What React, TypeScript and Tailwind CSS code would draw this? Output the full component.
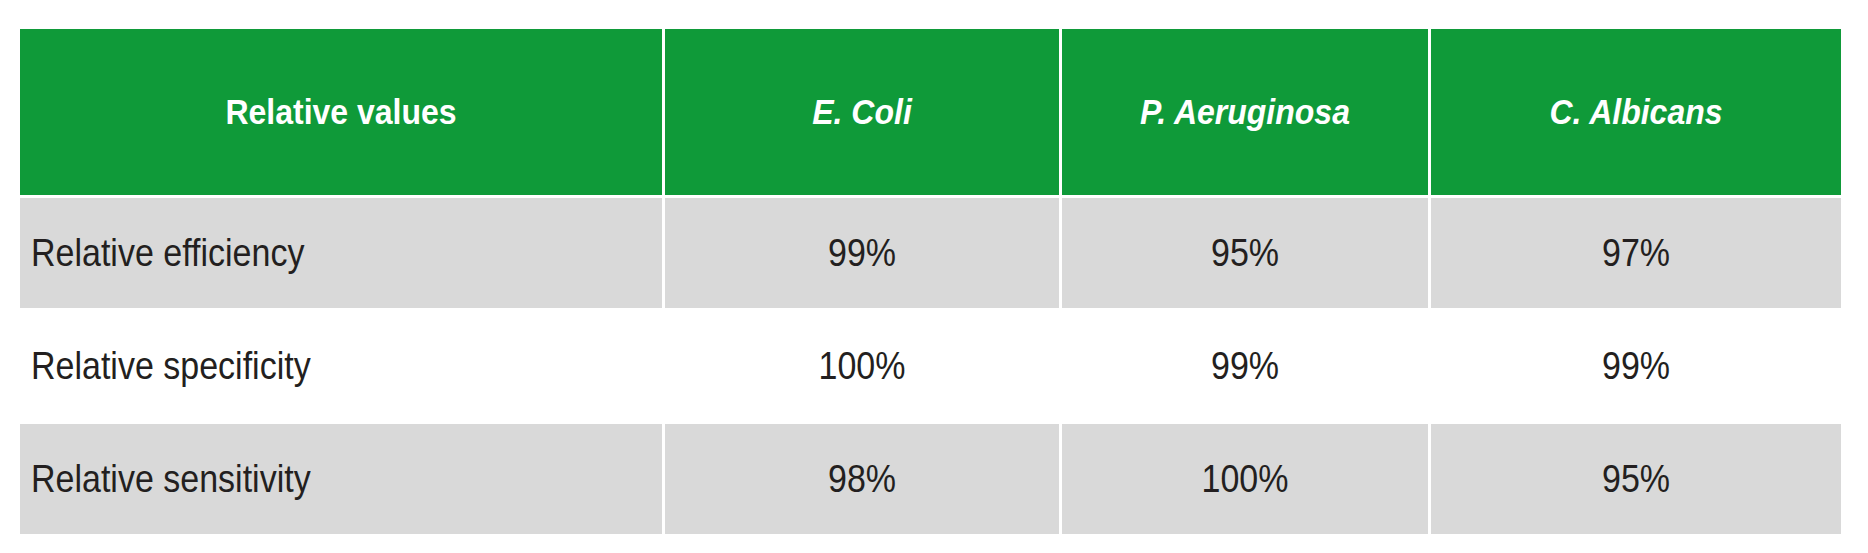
import React from "react";

type Row = {
  label: string;
  values: string[];
  shaded: boolean;
};

const species = ["E. Coli", "P. Aeruginosa", "C. Albicans"];

const rows: Row[] = [
  { label: "Relative efficiency", values: ["99%", "95%", "97%"], shaded: true },
  { label: "Relative specificity", values: ["100%", "99%", "99%"], shaded: false },
  { label: "Relative sensitivity", values: ["98%", "100%", "95%"], shaded: true },
];

export default function App() {
  return (
    <div className="min-h-[553px] w-full bg-white pl-[20px] pt-[29px] font-['Liberation_Sans',Arial,sans-serif]">
      <div className="grid w-[1821px] grid-cols-[642px_394px_366px_410px] grid-rows-[166px_110px_110px_110px] gap-[3px] bg-white">
        <div className="flex items-center justify-center bg-[#0f9a39] text-[32px] font-bold text-white">
          <span className="inline-block scale-y-[1.1]">Relative values</span>
        </div>
        {species.map((s) => (
          <div
            key={s}
            className="flex items-center justify-center bg-[#0f9a39] text-[32px] font-bold italic text-white"
          >
            <span className="inline-block scale-y-[1.1]">{s}</span>
          </div>
        ))}

        {rows.map((r) => (
          <React.Fragment key={r.label}>
            <div
              className={`flex items-center pl-[11px] text-[34px] text-[#231f20] ${
                r.shaded ? "bg-[#d9d9d9]" : "bg-white"
              }`}
            >
              <span className="inline-block scale-y-[1.12]">{r.label}</span>
            </div>
            {r.values.map((v, i) => (
              <div
                key={i}
                className={`flex items-center justify-center text-[34px] text-[#231f20] ${
                  r.shaded ? "bg-[#d9d9d9]" : "bg-white"
                }`}
              >
                <span className="inline-block scale-y-[1.12]">{v}</span>
              </div>
            ))}
          </React.Fragment>
        ))}
      </div>
    </div>
  );
}
